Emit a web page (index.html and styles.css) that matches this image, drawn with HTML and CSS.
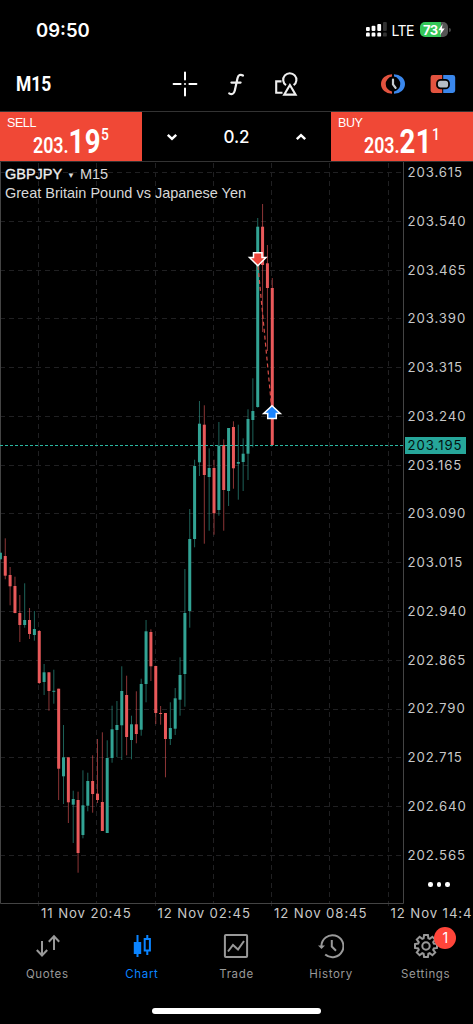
FILE: index.html
```html
<!DOCTYPE html>
<html lang="en">
<head>
    <meta charset="UTF-8">
    <meta name="viewport" content="width=device-width, initial-scale=1.0">
    <title>GBPJPY M15</title>
    <link rel="stylesheet" href="styles.css">
</head>
<body>
    <header class="status">
        <span class="clock">09:50</span>
        <div class="status-right">
            <svg class="signal" width="22" height="16" viewBox="0 0 22 16" fill="#fff">
                <rect x="0" y="5" width="3.8" height="4" rx="1"/>
                <rect x="5.6" y="3.7" width="3.8" height="5.3" rx="1"/>
                <rect x="11.3" y="2" width="3.8" height="7" rx="1"/>
                <rect x="17" y="0" width="3.8" height="9" rx="1" fill="#333"/>
                <rect x="0" y="10.6" width="3.8" height="4" rx="1.2"/>
                <rect x="5.6" y="10.6" width="3.8" height="4" rx="1.2"/>
                <rect x="11.3" y="10.6" width="3.8" height="4" rx="1.2"/>
                <rect x="17" y="10.6" width="3.8" height="4" rx="1.2" fill="#333"/>
            </svg>
            <span class="lte">LTE</span>
            <div class="battery">
                <span>73</span>
                <svg width="7" height="11" viewBox="0 0 7 11"><path d="M4.6 0L0.3 6.2H3L2 11L6.7 4.5H3.9Z" fill="#fff"/></svg>
            </div>
            <div class="battery-tip"></div>
        </div>
    </header>

    <nav class="toolbar">
        <span class="timeframe">M15</span>
        <div class="tools">
            <svg width="26" height="26" viewBox="0 0 26 26" stroke="#fff" stroke-width="2" stroke-linecap="round" fill="none">
                <path d="M13 1.6V8.6M13 17.4V24.4M1.6 13H8.6M17.4 13H24.4"/>
                <circle cx="13" cy="13" r="0.4" stroke-width="1.4"/>
            </svg>
            <svg width="18" height="26" viewBox="0 0 18 26" stroke="#eee" stroke-width="2.2" stroke-linecap="round" fill="none">
                <path d="M16 4.5C13.5 3 11.2 4 10.5 7.2L7.8 19.5C7 23 4.7 24 2.2 22.4M4.4 11.6H13.6"/>
            </svg>
            <svg width="26" height="26" viewBox="0 0 26 26" stroke="#eee" stroke-width="2.1" fill="none">
                <path d="M8.500 10.400H3.200V21.800H9.500"/>
                <path d="M13 14.200A6.600 6.600 0 1 1 20.600 14.200"/>
                <path d="M16.900 14L22.600 23.600H11.200Z"/>
            </svg>
        </div>
        <div class="modes">
            <svg width="24" height="22" viewBox="0 0 24 22">
                <path d="M11 1.200A11 9.800 0 0 0 11 20.800V18.400A7.500 7.500 0 0 1 11 3.600Z" fill="#e2533f"/>
                <path d="M13 1.200A11 9.800 0 0 1 13 20.800V18.400A7.500 7.500 0 0 0 13 3.600Z" fill="#3a87ec"/>
                <path d="M12 6.500V11.300L14.600 14.800" stroke="#c6ccd0" stroke-width="2.200" stroke-linecap="round" fill="none"/>
            </svg>
            <svg width="26" height="18" viewBox="0 0 26 18">
                <path d="M3 0H12.2V18H3A2.4 2.4 0 0 1 .6 15.600V2.400A2.400 2.400 0 0 1 3 0Z" fill="#e2533f"/>
                <path d="M13.2 0H22.800A2.400 2.400 0 0 1 25.200 2.400V15.600A2.400 2.400 0 0 1 22.800 18H13.200Z" fill="#3a87ec"/>
                <rect x="7" y="4.800" width="12" height="8.600" rx="3.500" fill="#b5bec5" stroke="#000" stroke-width="1.800"/>
            </svg>
        </div>
    </nav>

    <section class="trade">
        <button class="deal">
            <span class="side">SELL</span>
            <span class="price">203.<b>19</b><sup>5</sup></span>
        </button>
        <div class="volume">
            <svg width="12" height="8" viewBox="0 0 12 8"><path d="M1.800 1.800L6 5.800L10.200 1.800"/></svg>
            <span>0.2</span>
            <svg width="12" height="8" viewBox="0 0 12 8"><path d="M1.800 6.200L6 2.200L10.200 6.200"/></svg>
        </div>
        <button class="deal">
            <span class="side">BUY</span>
            <span class="price">203.<b>21</b><sup>1</sup></span>
        </button>
    </section>

    <main class="chart">
        <div class="plot">
            <svg id="plot" width="404" height="746" viewBox="0 162 404 746"></svg>
            <div class="symbol">
                <p><b>GBPJPY</b> <i>▼</i> M15</p>
                <p class="desc">Great Britain Pound vs Japanese Yen</p>
            </div>
        </div>
        <aside class="prices">
            <ul id="prices"></ul>
            <span class="last">203.195</span>
            <div class="more"><i></i><i></i><i></i></div>
        </aside>
    </main>

    <div class="times">
        <span>11 Nov 20:45</span>
        <span>12 Nov 02:45</span>
        <span>12 Nov 08:45</span>
        <span>12 Nov 14:4</span>
    </div>

    <footer class="tabs">
        <a class="tab">
            <svg width="26" height="26" viewBox="0 0 26 26">
                <path d="M8 8V22M2.800 17L8 22.500L13.200 17M20 17V3.500M14.800 8.800L20 3.200L25.200 8.800"/>
            </svg>
            <span>Quotes</span>
        </a>
        <a class="tab active">
            <svg width="26" height="26" viewBox="0 0 26 26">
                <path d="M8.500 2V24M18.300 2V6M18.300 17.500V22"/>
                <rect x="5.800" y="10" width="5.400" height="10" fill="#0a84ff"/>
                <rect x="15.700" y="6" width="5.200" height="11.500"/>
            </svg>
            <span>Chart</span>
        </a>
        <a class="tab">
            <svg width="26" height="26" viewBox="0 0 26 26">
                <rect x="1.900" y="1.900" width="22.200" height="22.200" rx="1"/>
                <path d="M5 18.500L10 12L15 16.500L21 8"/>
            </svg>
            <span>Trade</span>
        </a>
        <a class="tab">
            <svg width="26" height="26" viewBox="0 0 26 26">
                <path d="M3.400 13A11 11 0 1 1 7.200 21.500"/>
                <path d="M13.800 7V13.500L18 17.800"/>
                <path d="M0 12.500H7L3.500 16Z" fill="#999" stroke="none"/>
            </svg>
            <span>History</span>
        </a>
        <a class="tab">
            <svg width="26" height="26" viewBox="0 0 26 26">
                <path id="gear"/>
                <circle cx="13" cy="13" r="3.700"/>
            </svg>
            <span>Settings</span>
            <em class="badge">1</em>
        </a>
    </footer>
    <div class="home"></div>

    <script src="chart.js"></script>
</body>
</html>
```

FILE: styles.css
```css
* {
    box-sizing: border-box;
    margin: 0;
    padding: 0;
}

body {
    width: 473px;
    height: 1024px;
    overflow: hidden;
    background: #000;
    color: #fff;
    font-family: 'Inter', sans-serif;
    display: flex;
    flex-direction: column;
}

svg {
    display: block;
    flex-shrink: 0;
}

.status {
    height: 60px;
    padding: 0 22px 0 36px;
    display: flex;
    align-items: center;
    justify-content: space-between;
}

.clock {
    font-size: 18.5px;
    font-weight: 600;
    letter-spacing: 0;
}

.status-right {
    display: flex;
    align-items: center;
}

.signal {
    margin-right: -2px;
    transform: translateX(2px);
}

.lte {
    margin: 1px 6px 0 7px;
    font-size: 14px;
    letter-spacing: -0.5px;
}

.battery {
    width: 28px;
    height: 15px;
    margin-top: -1px;
    padding-left: 3px;
    border-radius: 5px;
    background: linear-gradient(90deg, #34c759 75%, #555 75%);
    display: flex;
    align-items: center;
    font-size: 13px;
    font-weight: 700;
    letter-spacing: -0.5px;
}

.battery-tip {
    width: 2px;
    height: 4px;
    margin-left: 1px;
    background: #444;
    border-radius: 0 2px 2px 0;
}

.toolbar {
    height: 51px;
    padding: 0 17px 3px 16px;
    display: grid;
    grid-template-columns: 156px 1fr 75px;
    align-items: center;
}

.timeframe {
    font-family: 'Roboto', sans-serif;
    font-size: 21px;
    font-weight: 700;
    transform: scaleX(0.83);
    transform-origin: left;
}

.tools {
    display: flex;
    align-items: center;
    gap: 29px;
}

.tools svg:last-child {
    margin-left: -1px;
}

.modes {
    display: flex;
    align-items: center;
    justify-content: space-between;
}

.trade {
    height: 51px;
    border-top: 1px solid #333;
    border-bottom: 1px solid #333;
    display: grid;
    grid-template-columns: 142px 1fr 142px;
}

.deal {
    border: none;
    background: #f04836;
    color: #fff;
    display: flex;
    flex-direction: column;
    align-items: flex-start;
}

.side {
    padding: 4px 0 0 7px;
    font-family: 'Liberation Sans', sans-serif;
    font-size: 12.5px;
    line-height: 14px;
    letter-spacing: -0.4px;
}

.price {
    height: 30px;
    margin-top: -4px;
    padding-left: 33px;
    font-family: 'Roboto', sans-serif;
    font-size: 22px;
    font-weight: 600;
    line-height: 30px;
    white-space: nowrap;
    transform: scaleX(0.81);
    transform-origin: 33px 0;
}

.price b {
    font-size: 34px;
    font-weight: 700;
    letter-spacing: 0.5px;
}

.price sup {
    font-size: 17px;
    font-weight: 500;
    line-height: 0;
    vertical-align: 13px;
}

.volume {
    padding: 0 24px;
    display: flex;
    align-items: center;
    justify-content: space-between;
    font-size: 17px;
    font-weight: 500;
}

.volume path {
    stroke: #fff;
    stroke-width: 2.5;
    fill: none;
}

.chart {
    height: 742px;
    display: flex;
}

.plot {
    position: relative;
    width: 404px;
}

.symbol {
    position: absolute;
    top: 4px;
    left: 5px;
    font-family: 'Liberation Sans', sans-serif;
    font-size: 14.5px;
    line-height: 17px;
    color: #d8d8d8;
    white-space: nowrap;
}

.symbol b {
    font-weight: 400;
    color: #f0f0f0;
    -webkit-text-stroke: 0.3px #f0f0f0;
}

.symbol i {
    margin: 0 1px;
    font-size: 8px;
    font-style: normal;
    line-height: 1;
    vertical-align: 1px;
}

.desc {
    margin-top: 2px;
}

.prices {
    position: relative;
    flex: 1;
    padding-left: 3.5px;
}

.prices ul {
    list-style: none;
}

.prices li {
    height: 48.78px;
    line-height: 20px;
    font-size: 13.2px;
    letter-spacing: 0.9px;
    color: #c8c8c8;
}

.last {
    position: absolute;
    top: 275px;
    left: 1px;
    width: 61px;
    height: 17px;
    padding-left: 2.5px;
    background: #26a69a;
    color: #04110f;
    font-size: 13.2px;
    line-height: 17px;
    letter-spacing: 0.95px;
}

.more {
    position: absolute;
    top: 720px;
    left: 24px;
    display: flex;
    gap: 4px;
}

.more i {
    width: 4.5px;
    height: 4.5px;
    border-radius: 50%;
    background: #fff;
}

.times {
    width: 473px;
    height: 22px;
    padding-left: 41px;
    display: flex;
    overflow: hidden;
    font-size: 13.2px;
    line-height: 19px;
    letter-spacing: 0.9px;
    color: #c8c8c8;
    white-space: nowrap;
}

.times span {
    flex: 0 0 116.5px;
}

.times span:last-child {
    flex: 1;
}

.tabs {
    height: 82px;
    padding-top: 7px;
    display: grid;
    grid-template-columns: repeat(5, 1fr);
}

.tab {
    position: relative;
    display: flex;
    flex-direction: column;
    align-items: center;
    gap: 7px;
    font-size: 11.5px;
    line-height: 16px;
    letter-spacing: 0.65px;
    color: #999;
}

.tab svg {
    fill: none;
    stroke: #999;
    stroke-width: 2;
}

.tab.active {
    color: #0a84ff;
}

.tab.active svg {
    stroke: #0a84ff;
}

.badge {
    position: absolute;
    top: -6px;
    left: 56px;
    width: 22px;
    height: 22px;
    border-radius: 50%;
    background: #ff453a;
    color: #fff;
    font-size: 14px;
    font-style: normal;
    line-height: 22px;
    letter-spacing: 0;
    text-align: center;
}

.home {
    width: 169px;
    height: 6px;
    margin: 0 auto;
    border-radius: 3px;
    background: #fff;
}

/* chart */
.grid {
    stroke: #202022;
    stroke-dasharray: 5 4;
}

.frame {
    stroke: #444;
    fill: none;
}

.bid {
    stroke: #2bb8a3;
    stroke-dasharray: 3 2;
}

.up {
    fill: #32a394;
}

.down {
    fill: #e9595a;
}

.wick {
    opacity: 0.6;
}

.deal-line {
    stroke: #d94c46;
    stroke-width: 1.2;
    stroke-dasharray: 4 3;
}

.arrow {
    stroke: #fff;
    stroke-width: 1.5;
}
```

FILE: chart.js
```javascript
// direction, high, low, body top, body bottom (screen y)
const candles = [
    ['up', 553, 559, 552.7, 559.3],
    ['down', 538.3, 579.3, 556, 575.7],
    ['down', 567, 605.3, 575, 586.3],
    ['down', 576.7, 613.3, 586, 613],
    ['down', 595, 642, 613, 625],
    ['up', 583.3, 627.7, 620, 625],
    ['down', 608, 639, 620, 634],
    ['up', 611, 640.7, 629, 635],
    ['down', 630, 684, 631, 683],
    ['up', 664, 695, 672.3, 682],
    ['down', 672.3, 710.7, 672.3, 691],
    ['up', 669.7, 703.7, 690.8, 691.8],
    ['down', 688.7, 800, 688.7, 768.7],
    ['up', 725, 804, 757.3, 776.3],
    ['down', 757.3, 823, 757.3, 802.3],
    ['up', 790.7, 843, 799, 804.7],
    ['down', 791.7, 872.7, 800, 853],
    ['up', 770.3, 838.3, 805.3, 835],
    ['up', 772.7, 811.3, 781, 805.7],
    ['down', 755.3, 812.7, 781, 794],
    ['down', 739, 803, 793.7, 800],
    ['down', 732.3, 831, 802, 831],
    ['up', 740.3, 833, 758, 833],
    ['up', 705.7, 762.7, 729.3, 758],
    ['up', 701, 757, 725, 730],
    ['up', 666.3, 760, 691, 725.3],
    ['down', 675.7, 755.3, 695, 737],
    ['up', 715.7, 759.3, 724.3, 740],
    ['down', 691.3, 743.3, 724.3, 734],
    ['up', 678.7, 735.7, 684, 729.7],
    ['up', 620, 702.3, 631.3, 684],
    ['down', 629.3, 681, 632, 666.3],
    ['down', 665.7, 724, 666, 713],
    ['down', 706, 724.7, 713, 714],
    ['down', 713, 777.3, 713, 739],
    ['up', 702.3, 745, 728, 739],
    ['up', 688, 735, 698.3, 728.7],
    ['up', 657.3, 715.7, 675, 699.7],
    ['up', 569, 706.7, 613, 674],
    ['up', 509, 627.7, 539, 611],
    ['up', 459.7, 547.3, 466, 539],
    ['up', 401, 476, 423.7, 462.3],
    ['down', 405.3, 543.7, 424.7, 475],
    ['up', 448.3, 530.7, 468, 477],
    ['down', 459.7, 534.7, 468, 513.3],
    ['up', 422, 515.7, 445.7, 510],
    ['down', 439.3, 530.7, 445, 490],
    ['up', 428, 506, 428, 491],
    ['down', 421.3, 488.7, 427, 468.3],
    ['up', 424.7, 499.7, 462, 463.7],
    ['up', 438.3, 491, 453.7, 462],
    ['up', 409.3, 480, 419, 453.7],
    ['up', 378.3, 447.3, 411, 420],
    ['up', 218, 407.7, 226.7, 407],
    ['down', 204, 332, 226.7, 265],
    ['down', 245, 351, 263.3, 288],
    ['down', 278, 446, 288, 445]
];

const step = 4.855;
let out = '';

// grid
for (let i = 0; i < 15; i++) {
    const y = Math.floor(172.5 + i * 48.78) + 0.5;
    out += `<line class="grid" x1="0" x2="403" y1="${y}" y2="${y}"/>`;
}
for (let i = 0; i < 7; i++) {
    const x = Math.floor(38.5 + i * 58.26) + 0.5;
    out += `<line class="grid" x1="${x}" x2="${x}" y1="163" y2="${i % 2 ? 903 : 907}"/>`;
}
out += '<path class="frame" d="M0.5 162V903.5H403.5V162"/>';

candles.forEach(([dir, high, low, top, bottom], i) => {
    const x = 0.4 + i * step;
    out += `<rect class="${dir} wick" x="${x - 0.5}" y="${high}" width="1" height="${low - high}"/>`;
    out += `<rect class="${dir}" x="${x - 1.5}" y="${top}" width="3" height="${bottom - top}"/>`;
});

out += '<line class="bid" x1="0" x2="403" y1="445.5" y2="445.5"/>';
out += '<line class="deal-line" x1="258" y1="266" x2="271.500" y2="406"/>';
out += '<path class="arrow" fill="#f0453a" d="M253.500 252.800H262V257.500H266L257.800 265.800L249.500 257.500H253.500Z"/>';
out += '<path class="arrow" fill="#1a84ff" d="M267.700 418.500H276.300V413.500H280.300L272 405.800L263.700 413.500H267.700Z"/>';
document.getElementById('plot').innerHTML = out;

// price scale
let labels = '';
for (let i = 0; i < 15; i++) {
    labels += `<li>${(203.615 - i * 0.075).toFixed(3)}</li>`;
}
document.getElementById('prices').innerHTML = labels;

// settings gear, 8 teeth
let gear = '';
for (let i = 0; i < 8; i++) {
    [[-17, 8.2], [-10, 11.2], [10, 11.2], [17, 8.2]].forEach(([a, r]) => {
        const t = (i * 45 + a) * Math.PI / 180;
        gear += (gear ? 'L' : 'M') + (13 + r * Math.sin(t)).toFixed(1) + ' ' + (13 - r * Math.cos(t)).toFixed(1);
    });
}
document.getElementById('gear').setAttribute('d', gear + 'Z');
```
